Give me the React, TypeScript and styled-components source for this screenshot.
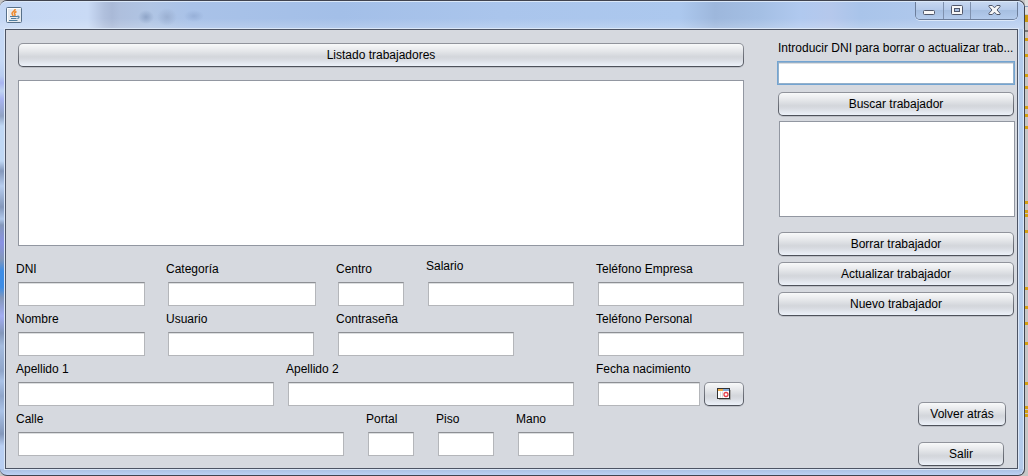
import React from "react";
import styled, { createGlobalStyle, css } from "styled-components";

const GlobalStyle = createGlobalStyle`
  *, *::before, *::after { box-sizing: border-box; }
  body {
    margin: 0;
    background: #c6c6c6;
    color: #000;
    font-family: "Liberation Sans", Arial, sans-serif;
    font-size: 12px;
  }
`;

const Desktop = styled.div`
  display: flex;
  min-height: 100vh;
`;

const Frame = styled.div`
  flex: 1;
  min-width: 0;
  display: flex;
  flex-direction: column;
  border: 1px solid #40434f;
  border-left: 0;
  border-radius: 7px;
  box-shadow: inset 0 1px 0 #dbe8f8, inset -1px 0 0 #dbe8f8;
  padding: 0 6px 6px 5px;
  background:
    linear-gradient(#a9bfe2, #bdd1f3) bottom / 100% 6px no-repeat,
    linear-gradient(
        180deg,
        #c6d9f5 0 60px,
        #b9cdf0 75px,
        #a9b4f0 82px,
        #c0d4f2 90px,
        #a9b4f0 98px,
        #90a3c4 115px,
        #c0d8f4 125px,
        #c0d8f4 160px,
        #8498bb 170px,
        #b6cdee 185px,
        #8498bb 206px,
        #b0c8ea 218px,
        #8498bb 224px,
        #8a92e4 242px,
        #8498bb 258px,
        #3d8de6 270px,
        #3d8de6 286px,
        #8498bb 297px,
        #a3adf2 315px,
        #8498bb 332px,
        #a4bbdd 345px,
        #90a6ca 370px,
        #aac2e6 380px,
        #90a6ca 395px,
        #aac2e6 410px,
        #8498bb 433px,
        #b9cff2 445px
      )
      left / 5px 100% no-repeat,
    #b4cbea;
`;

const TitleBar = styled.header`
  display: flex;
  align-items: flex-start;
  justify-content: space-between;
  height: 28px;
  margin: 0 -6px 0 -5px;
  padding: 0 6px;
  border-radius: 7px 7px 0 0;
  border-top: 1px solid #dbe8f8;
  background:
    radial-gradient(ellipse 8px 7px at 146px 15px, #8fa5c8, transparent),
    radial-gradient(ellipse 10px 9px at 167px 15px, #9bb0d2, transparent),
    radial-gradient(ellipse 10px 6px at 194px 14px, #97b0d8, transparent),
    linear-gradient(180deg, #ffffff00 60%, #ffffff33),
    linear-gradient(
      90deg,
      #c4d7f4,
      #c9daf5 88px,
      #b0c0dd 104px,
      #a9b9d7 112px,
      #aebfdd 120px,
      #b0c5e4 150px,
      #a9c2e8 190px,
      #a3bfe8 340px,
      #aac5ec 500px,
      #acc8ee 680px,
      #9db7dc 715px,
      #a4bfe4 760px,
      #b0c9ef 800px,
      #b5c8ec 830px,
      #a9c4ea 860px,
      #b8cef0
    );
`;

const JavaIcon = styled.svg`
  display: block;
  margin-top: 5px;
`;

const Controls = styled.div`
  display: flex;
  height: 18px;
  border: 1px solid #6c7e9b;
  border-top: 0;
  border-radius: 0 0 5px 5px;
  box-shadow: 0 1px 0 #dce8f9;
  overflow: hidden;
`;

const ControlButton = styled.button<{ $wide?: boolean }>`
  display: flex;
  align-items: flex-start;
  justify-content: center;
  width: ${(p) => (p.$wide ? 47 : 27)}px;
  padding: 0;
  border: 0;
  background: linear-gradient(#c6d7f0, #b5caea 45%, #a6bfe1 50%, #b4cbec);
  & + & {
    border-left: 1px solid #7f91ae;
  }
`;

const Client = styled.main`
  flex: 1;
  display: flex;
  justify-content: space-between;
  gap: 30px;
  padding: 8px 1px 0 10px;
  border: 1px solid #4d5464;
  box-shadow: 0 0 0 1px #dbe7f7;
  background: #d6d9df;
`;

const Records = styled.section`
  flex: 1;
  min-width: 0;
`;

const Sidebar = styled.aside`
  display: flex;
  flex-direction: column;
  width: 240px;
  padding-left: 2px;
`;

const raised = css`
  border: 1px solid transparent;
  border-radius: 5px;
  background:
    linear-gradient(#f8f9fa, #e6e8eb 30%, #d3d6db 58%, #d8dbe1 70%, #edf2fa) padding-box,
    linear-gradient(#92959d, #4d515a) border-box;
  box-shadow: 0 1px 0 #bcbfc6;
`;

const Button = styled.button<{ $width?: number }>`
  ${raised}
  display: flex;
  align-items: center;
  justify-content: center;
  width: ${(p) => (p.$width ? `${p.$width}px` : "auto")};
  height: 24px;
  padding: 0;
  color: inherit;
  font: inherit;
  white-space: nowrap;
`;

const ListButton = styled(Button)`
  width: calc(100% - 4px);
  margin: 5px 2px 13px;
`;

const TextArea = styled.textarea<{ $height: number }>`
  display: block;
  height: ${(p) => p.$height}px;
  padding: 4px;
  border: 1px solid #9297a1;
  border-radius: 0;
  outline: 0;
  background: #fff;
  font: inherit;
  resize: none;
`;

const RecordsArea = styled(TextArea)`
  width: calc(100% - 4px);
  margin: 0 2px 10px;
`;

const ResultArea = styled(TextArea)`
  margin: 5px 1px 15px;
`;

const FieldRow = styled.div<{ $columns: number[] }>`
  display: grid;
  grid-template-columns: ${(p) => p.$columns.map((c) => `minmax(0, ${c}fr)`).join(" ")};
  padding-right: 2px;
`;

const FieldBox = styled.div<{ $gap: number }>`
  padding-right: ${(p) => p.$gap}px;
`;

const FieldLabel = styled.label<{ $top?: boolean }>`
  display: flex;
  align-items: ${(p) => (p.$top ? "flex-start" : "center")};
  height: 26px;
  line-height: 20px;
  white-space: nowrap;
`;

const FieldLine = styled.div`
  display: flex;
  gap: 4px;
  padding-left: 2px;
`;

const Input = styled.input`
  flex: 1;
  min-width: 0;
  width: 100%;
  height: 24px;
  padding: 0 6px;
  border: 1px solid #b4b6ba;
  border-top-color: #8d8f94;
  border-radius: 0;
  outline: 0;
  background: #fff;
  box-shadow: inset 0 1px 0 #dcdee0;
  font: inherit;
`;

const SearchLabel = styled.label`
  line-height: 20px;
  white-space: nowrap;
`;

const SearchInput = styled(Input)`
  flex: none;
  height: 22px;
  margin: 4px 0 8px;
  box-shadow: inset 0 1px 0 #dcdee0, 0 0 0 1px #73a4d1;
  border-color: #93b0cb;
`;

const Search = styled.div`
  display: flex;
  flex-direction: column;
  padding-right: 2px;
`;

const Actions = styled.div`
  display: flex;
  flex-direction: column;
  gap: 6px;
  padding-right: 2px;
`;

const Exit = styled.div`
  display: flex;
  flex-direction: column;
  gap: 16px;
  width: 98px;
  margin: auto 0 2px auto;
`;

const Ruler = styled.svg`
  flex: none;
  width: 3px;
  height: 430px;
`;

interface FieldProps {
  id: string;
  label: string;
  gap?: number;
  top?: boolean;
  children?: React.ReactNode;
}

function Field({ id, label, gap = 0, top, children }: FieldProps) {
  return (
    <FieldBox $gap={gap}>
      <FieldLabel htmlFor={id} $top={top}>
        {label}
      </FieldLabel>
      <FieldLine>
        <Input id={id} type="text" />
        {children}
      </FieldLine>
    </FieldBox>
  );
}

const rulerMarks = [39, 55, 75, 87, 107, 115, 127, 202, 211, 215, 231, 288, 307, 323, 343, 383, 407, 411, 415];

export default function App() {
  return (
    <>
      <GlobalStyle />
      <Desktop>
        <Frame>
          <TitleBar>
            <JavaIcon width="16" height="16" viewBox="0 0 16 16" aria-hidden="true">
              <rect x=".5" y=".5" width="15" height="15" rx="1" fill="#e6eaee" stroke="#57708a" />
              <path d="M1.5 14.5v-13h13" fill="none" stroke="#fff" />
              <path
                d="M9.2 2C9.5 4 6 4.700 6 6.500c0 1 1 1.500 1.200 2.500M10.500 4.500C8.500 5.500 7.800 6.300 8.800 7.300c.6.7.1 1.300-.4 1.700"
                fill="none"
                stroke="#ee8a2c"
                strokeWidth="1.500"
              />
              <path
                d="M4 9.500h7M5 11.500h5.500M3 13.500h8.500M11 9.500c2.800-1.300 2.500 1.700.3 2"
                fill="none"
                stroke="#4f7d9f"
                strokeWidth="1.200"
              />
            </JavaIcon>
            <Controls>
              <ControlButton aria-label="Minimizar">
                <svg width="13" height="14" viewBox="0 0 13 14">
                  <rect x=".5" y="8.500" width="11" height="4" rx="1" fill="#f7f7f7" stroke="#50576a" />
                </svg>
              </ControlButton>
              <ControlButton aria-label="Maximizar">
                <svg width="13" height="14" viewBox="0 0 13 14">
                  <rect x=".5" y="3.500" width="11" height="9" rx="1" fill="#f7f7f7" stroke="#50576a" />
                  <rect x="3.500" y="6.500" width="5" height="3" fill="#a9c0e2" stroke="#50576a" />
                </svg>
              </ControlButton>
              <ControlButton $wide aria-label="Cerrar">
                <svg width="13" height="14" viewBox="0 0 13 14">
                  <path
                    d="M1 3.500h3.300l2.200 2.300 2.200-2.300H12v1.200L9 8l3 3.300v1.200H8.700L6.500 10.200 4.300 12.500H1v-1.200L4 8 1 4.700z"
                    fill="#f7f7f7"
                    stroke="#50576a"
                  />
                </svg>
              </ControlButton>
            </Controls>
          </TitleBar>
          <Client>
            <Records>
              <ListButton>Listado trabajadores</ListButton>
              <RecordsArea $height={166} aria-label="Listado de trabajadores" />
              <FieldRow $columns={[150, 170, 90, 170, 148]}>
                <Field id="dni" label="DNI" gap={21} />
                <Field id="categoria" label="Categoría" gap={20} />
                <Field id="centro" label="Centro" gap={22} />
                <Field id="salario" label="Salario" gap={22} top />
                <Field id="tel-empresa" label="Teléfono Empresa" />
              </FieldRow>
              <FieldRow $columns={[150, 170, 260, 148]}>
                <Field id="nombre" label="Nombre" gap={21} />
                <Field id="usuario" label="Usuario" gap={22} />
                <Field id="contrasena" label="Contraseña" gap={82} />
                <Field id="tel-personal" label="Teléfono Personal" />
              </FieldRow>
              <FieldRow $columns={[270, 310, 148]}>
                <Field id="apellido1" label="Apellido 1" gap={12} />
                <Field id="apellido2" label="Apellido 2" gap={22} />
                <Field id="fecha" label="Fecha nacimiento">
                  <Button $width={40} aria-label="Elegir fecha">
                    <svg width="14" height="12" viewBox="0 0 14 12">
                      <path d="M2 11.500h11.500V2" fill="none" stroke="#aaa" />
                      <rect x=".5" y=".5" width="12" height="10" fill="#fff" stroke="#333" />
                      <rect x="1" y="1" width="5" height="2" fill="#f0ad45" />
                      <rect x="6" y="1" width="6" height="2" fill="#85abd9" />
                      <path d="M3.500 3.500v6M5.500 3.500v6" stroke="#ddd" />
                      <circle cx="9" cy="6.500" r="2" fill="#fff" stroke="#e8404a" strokeWidth="1.300" />
                    </svg>
                  </Button>
                </Field>
              </FieldRow>
              <FieldRow $columns={[350, 70, 80, 80, 148]}>
                <Field id="calle" label="Calle" gap={22} />
                <Field id="portal" label="Portal" gap={22} />
                <Field id="piso" label="Piso" gap={22} />
                <Field id="mano" label="Mano" gap={22} />
              </FieldRow>
            </Records>
            <Sidebar>
              <Search>
                <SearchLabel htmlFor="buscar-dni">Introducir DNI para borrar o actualizar trab...</SearchLabel>
                <SearchInput id="buscar-dni" type="text" />
              </Search>
              <Actions>
                <Button>Buscar trabajador</Button>
              </Actions>
              <ResultArea $height={96} aria-label="Resultado de la búsqueda" />
              <Actions>
                <Button>Borrar trabajador</Button>
                <Button>Actualizar trabajador</Button>
                <Button>Nuevo trabajador</Button>
              </Actions>
              <Exit>
                <Button $width={88}>Volver atrás</Button>
                <Button $width={86}>Salir</Button>
              </Exit>
            </Sidebar>
          </Client>
        </Frame>
        <Ruler viewBox="0 0 3 430" aria-hidden="true">
          <rect width="3" height="14" fill="#dedede" />
          <rect y="6" width="3" height="1" fill="#8aa0c0" />
          <rect y="15" width="3" height="7" fill="#c99a12" />
          <rect y="30" width="3" height="2" fill="#777" />
          {rulerMarks.map((y) => (
            <rect key={y} y={y - 1} width="3" height="3" fill="#d5a012" />
          ))}
        </Ruler>
      </Desktop>
    </>
  );
}
